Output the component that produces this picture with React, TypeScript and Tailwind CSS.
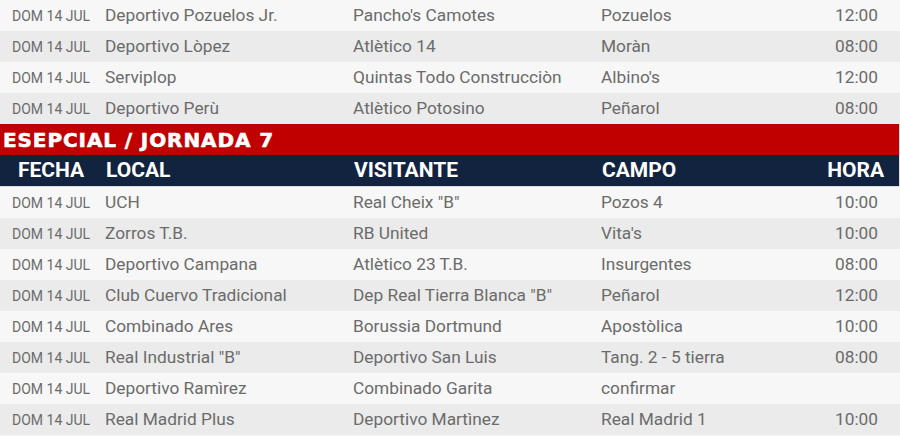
import React from "react";

type Row = [string, string, string, string];

const top: Row[] = [
  ["Deportivo Pozuelos Jr.", "Pancho's Camotes", "Pozuelos", "12:00"],
  ["Deportivo Lòpez", "Atlètico 14", "Moràn", "08:00"],
  ["Serviplop", "Quintas Todo Construcciòn", "Albino's", "12:00"],
  ["Deportivo Perù", "Atlètico Potosino", "Peñarol", "08:00"],
];

const bottom: Row[] = [
  ["UCH", "Real Cheix \"B\"", "Pozos 4", "10:00"],
  ["Zorros T.B.", "RB United", "Vita's", "10:00"],
  ["Deportivo Campana", "Atlètico 23 T.B.", "Insurgentes", "08:00"],
  ["Club Cuervo Tradicional", "Dep Real Tierra Blanca \"B\"", "Peñarol", "12:00"],
  ["Combinado Ares", "Borussia Dortmund", "Apostòlica", "10:00"],
  ["Real Industrial \"B\"", "Deportivo San Luis", "Tang. 2 - 5 tierra", "08:00"],
  ["Deportivo Ramìrez", "Combinado Garita", "confirmar", ""],
  ["Real Madrid Plus", "Deportivo Martìnez", "Real Madrid 1", "10:00"],
];

function MatchRow({ r, i }: { r: Row; i: number }) {
  return (
    <div
      className={`grid grid-cols-[105px_248px_248px_1fr_auto] items-center h-[31px] text-[#6b6b6b] ${
        i % 2 === 0 ? "bg-[#f7f7f7]" : "bg-[#ebebeb]"
      }`}
    >
      <div className="pl-[12px] text-[14px] leading-none">DOM 14 JUL</div>
      <div className="text-[17.3px] leading-none whitespace-nowrap">{r[0]}</div>
      <div className="text-[17.3px] leading-none whitespace-nowrap">{r[1]}</div>
      <div className="text-[17.3px] leading-none whitespace-nowrap">{r[2]}</div>
      <div className="pr-[22px] text-[17.3px] leading-none text-right">{r[3]}</div>
    </div>
  );
}

export default function App() {
  return (
    <div
      className="w-[900px] h-[436px] overflow-hidden bg-[#f7f7f7]"
      style={{ fontFamily: "Roboto, 'Noto Sans', sans-serif" }}
    >
      {top.map((r, i) => (
        <MatchRow key={i} r={r} i={i} />
      ))}
      <div className="h-[31px] bg-[#c00000] flex items-center pl-[3px] border-r border-[#e0e0e0]">
        <span className="text-white font-bold text-[20px] tracking-[0.9px] leading-none font-['DejaVu_Sans',sans-serif] [-webkit-text-stroke:0.6px_white]">
          ESEPCIAL / JORNADA 7
        </span>
      </div>
      <div className="h-[31px] bg-[#11233f] grid grid-cols-[105px_248px_248px_1fr_auto] items-center text-white font-bold text-[21px] leading-none border-r border-[#e0e0e0]">
        <div className="pl-[18px]">FECHA</div>
        <div className="pl-[1px]">LOCAL</div>
        <div className="pl-[1px]">VISITANTE</div>
        <div className="pl-[1px]">CAMPO</div>
        <div className="pr-[15px]">HORA</div>
      </div>
      <div className="h-[1px] bg-[#dcdcdc]" />
      {bottom.map((r, i) => (
        <MatchRow key={i} r={r} i={i} />
      ))}
    </div>
  );
}
